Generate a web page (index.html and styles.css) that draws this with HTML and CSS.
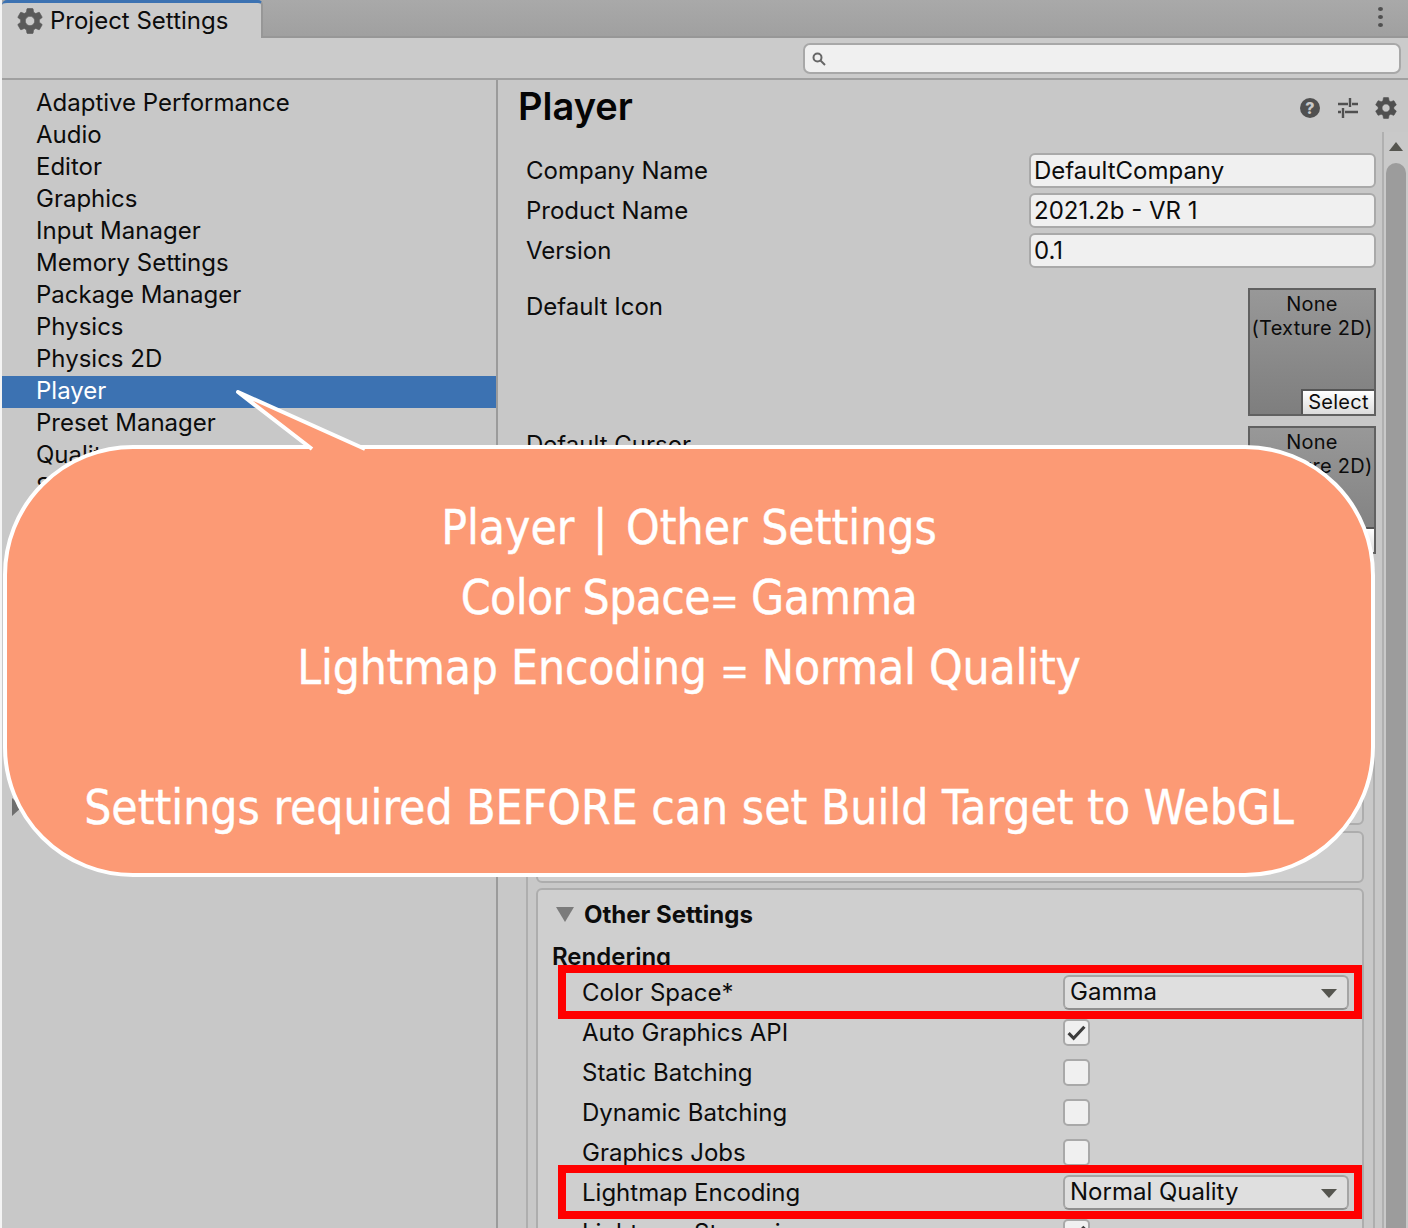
FILE: index.html
```html
<!DOCTYPE html>
<html lang="en">
<head>
    <meta charset="UTF-8">
    <title>Project Settings</title>
    <link rel="stylesheet" href="styles.css">
</head>
<body>
    <header class="tabbar">
        <div class="tab">
            <svg class="tab-gear" viewBox="2 2 20 20"><path d="M19.14 12.94c.04-.3.06-.61.06-.94 0-.32-.02-.64-.07-.94l2.03-1.58c.18-.14.23-.41.12-.61l-1.92-3.32c-.12-.22-.37-.29-.59-.22l-2.39.96c-.5-.38-1.03-.7-1.62-.94l-.36-2.54c-.04-.24-.24-.41-.48-.41h-3.84c-.24 0-.43.17-.47.41l-.36 2.54c-.59.24-1.13.57-1.62.94l-2.39-.96c-.22-.08-.47 0-.59.22L2.74 8.87c-.12.21-.08.47.12.61l2.03 1.58c-.05.3-.09.63-.09.94s.02.64.07.94l-2.03 1.58c-.18.14-.23.41-.12.61l1.92 3.32c.12.22.37.29.59.22l2.39-.96c.5.38 1.03.7 1.62.94l.36 2.54c.05.24.24.41.48.41h3.84c.24 0 .44-.17.47-.41l.36-2.54c.59-.24 1.13-.56 1.62-.94l2.39.96c.22.08.47 0 .59-.22l1.92-3.32c.12-.22.07-.47-.12-.61l-2.01-1.58zM12 15.6c-1.98 0-3.6-1.62-3.6-3.6s1.62-3.6 3.6-3.6 3.6 1.62 3.6 3.6-1.62 3.6-3.6 3.6z"/></svg>
            <span>Project Settings</span>
        </div>
        <div class="dots"><i></i><i></i><i></i></div>
    </header>

    <div class="toolbar">
        <div class="search">
            <svg viewBox="0 0 16 16" class="search-icon"><circle cx="6.5" cy="6.5" r="4" /><path d="M9.5 9.5 14 14" /></svg>
        </div>
    </div>

    <main class="main">
        <nav class="sidebar">
            <a>Adaptive Performance</a>
            <a>Audio</a>
            <a>Editor</a>
            <a>Graphics</a>
            <a>Input Manager</a>
            <a>Memory Settings</a>
            <a>Package Manager</a>
            <a>Physics</a>
            <a>Physics 2D</a>
            <a class="active">Player</a>
            <a>Preset Manager</a>
            <a>Quality</a>
            <a>Scene Template</a>
            <span class="tree-arrow"></span>
        </nav>

        <section class="content">
            <div class="content-head">
                <h1>Player</h1>
                <div class="head-icons">
                    <svg viewBox="0 0 22 22"><circle cx="11" cy="11" r="10" class="fill-icon" /><text x="11" y="16.5" text-anchor="middle" class="help-mark">?</text></svg>
                    <svg viewBox="0 0 22 22" class="sliders"><path d="M1 7h10M15 7h6M13 1v9M1 15h3M8 15h13M6 11v10" /></svg>
                    <svg viewBox="2 2 20 20" class="gear-icon"><path d="M19.14 12.94c.04-.3.06-.61.06-.94 0-.32-.02-.64-.07-.94l2.03-1.58c.18-.14.23-.41.12-.61l-1.92-3.32c-.12-.22-.37-.29-.59-.22l-2.39.96c-.5-.38-1.03-.7-1.62-.94l-.36-2.54c-.04-.24-.24-.41-.48-.41h-3.84c-.24 0-.43.17-.47.41l-.36 2.54c-.59.24-1.13.57-1.62.94l-2.39-.96c-.22-.08-.47 0-.59.22L2.74 8.87c-.12.21-.08.47.12.61l2.03 1.58c-.05.3-.09.63-.09.94s.02.64.07.94l-2.03 1.58c-.18.14-.23.41-.12.61l1.92 3.32c.12.22.37.29.59.22l2.39-.96c.5.38 1.03.7 1.62.94l.36 2.54c.05.24.24.41.48.41h3.84c.24 0 .44-.17.47-.41l.36-2.54c.59-.24 1.13-.56 1.62-.94l2.39.96c.22.08.47 0 .59-.22l1.92-3.32c.12-.22.07-.47-.12-.61l-2.01-1.58zM12 15.6c-1.98 0-3.6-1.62-3.6-3.6s1.62-3.6 3.6-3.6 3.6 1.62 3.6 3.6-1.62 3.6-3.6 3.6z"/></svg>
                </div>
            </div>

            <div class="content-body">
                <div class="inspector">
                    <div class="fields">
                        <div class="field-row"><label>Company Name</label><div class="text-field">DefaultCompany</div></div>
                        <div class="field-row"><label>Product Name</label><div class="text-field">2021.2b - VR 1</div></div>
                        <div class="field-row"><label>Version</label><div class="text-field">0.1</div></div>
                    </div>

                    <div class="texture-row">
                        <label>Default Icon</label>
                        <div class="texture">None<br>(Texture 2D)<span class="select-btn">Select</span></div>
                    </div>
                    <div class="texture-row">
                        <label>Default Cursor</label>
                        <div class="texture">None<br>(Texture 2D)<span class="select-btn">Select</span></div>
                    </div>

                    <div class="panels">
                        <div class="panel panel-tall"></div>
                        <div class="panel panel-short"></div>

                        <div class="panel panel-other">
                            <div class="foldout"><span class="fold-arrow"></span>Other Settings</div>
                            <div class="group-title">Rendering</div>
                            <div class="prop hl"><label>Color Space*</label><div class="dropdown">Gamma</div></div>
                            <div class="prop"><label>Auto Graphics API</label><div class="check on"><svg viewBox="0 0 16 16"><path d="M2.5 8.5 6 12l7.5-8" /></svg></div></div>
                            <div class="prop"><label>Static Batching</label><div class="check"></div></div>
                            <div class="prop"><label>Dynamic Batching</label><div class="check"></div></div>
                            <div class="prop"><label>Graphics Jobs</label><div class="check"></div></div>
                            <div class="prop hl"><label>Lightmap Encoding</label><div class="dropdown">Normal Quality</div></div>
                            <div class="prop"><label>Lightmap Streaming</label><div class="check on"><svg viewBox="0 0 16 16"><path d="M2.5 8.5 6 12l7.5-8" /></svg></div></div>
                        </div>
                    </div>
                </div>
                <div class="scrollbar">
                    <span class="scroll-up"></span>
                    <div class="thumb"></div>
                </div>
            </div>
        </section>
    </main>

    <!-- speech bubble over the window -->
    <aside class="callout">
        <svg class="callout-tail" viewBox="0 0 140 66"><path d="M77 59 3 2 130 59" /></svg>
        <p>Player <span class="pipe">|</span> Other Settings</p>
        <p class="tighter">Color Space<span class="eq">=</span> Gamma</p>
        <p class="tight">Lightmap Encoding <span class="eq">=</span> Normal Quality</p>
        <p>&nbsp;</p>
        <p>Settings required BEFORE can set Build Target to WebGL</p>
    </aside>
</body>
</html>
```

FILE: styles.css
```css
* {
    box-sizing: border-box;
}

html, body {
    margin: 0;
    padding: 0;
}

body {
    position: relative;
    display: flex;
    flex-direction: column;
    height: 1228px;
    overflow: hidden;
    padding-left: 2px;
    background-color: #f4f4f4;
    color: #0c0c0c;
    font-family: Inter, "Liberation Sans", sans-serif;
    font-size: 24px;
}

/* tab strip */
.tabbar {
    display: flex;
    justify-content: space-between;
    height: 38px;
    background: linear-gradient(#a9a9a9, #a0a0a0);
    border-bottom: 2px solid #979797;
}

.tab {
    display: flex;
    align-items: center;
    gap: 7px;
    width: 261px;
    height: 38px;
    padding: 0 0 0 15px;
    background-color: #cbcbcb;
    border-top: 3px solid #3c72b2;
    border-right: 2px solid #979797;
    border-radius: 5px 5px 0 0;
}

.tab-gear {
    width: 26px;
    height: 26px;
    fill: #5a5a5a;
    stroke: #5a5a5a;
    stroke-width: 0.5;
}

.dots {
    display: flex;
    flex-direction: column;
    gap: 4px;
    padding: 7px 25px 0 0;
}

.dots i {
    display: block;
    width: 5px;
    height: 4px;
    border-radius: 50%;
    background-color: #4f4f4f;
}

/* search bar */
.toolbar {
    display: flex;
    justify-content: flex-end;
    height: 42px;
    padding: 5px 7px 0 0;
    background-color: #cbcbcb;
    border-bottom: 2px solid #a0a0a0;
}

.search {
    display: flex;
    align-items: center;
    width: 598px;
    height: 31px;
    padding-left: 6px;
    background-color: #f0f0f0;
    border: 2px solid #a8a8a8;
    border-radius: 7px;
}

.search-icon {
    width: 16px;
    height: 16px;
    fill: none;
    stroke: #666;
    stroke-width: 2;
}

/* main area */
.main {
    display: flex;
    flex: 1;
    min-height: 0;
    background-color: #c8c8c8;
}

.sidebar {
    display: flex;
    flex-direction: column;
    width: 496px;
    flex-shrink: 0;
    padding-top: 8px;
    border-right: 2px solid #9b9b9b;
}

.sidebar a {
    display: block;
    height: 32px;
    padding-left: 34px;
    line-height: 30px;
}

.sidebar a.active {
    background-color: #3c72b2;
    color: #fff;
}

.tree-arrow {
    width: 0;
    height: 0;
    margin: 294px 0 0 10px;
    border-left: 10px solid #6e6e6e;
    border-top: 9px solid transparent;
    border-bottom: 9px solid transparent;
}

.content {
    display: flex;
    flex-direction: column;
    flex: 1;
    min-width: 0;
}

.content-head {
    display: flex;
    justify-content: space-between;
    align-items: center;
    height: 52px;
    padding: 0 11px 0 20px;
}

.content-head h1 {
    margin: 0;
    font-size: 38px;
    font-weight: 600;
    color: #050505;
}

.head-icons {
    display: flex;
    align-items: center;
    gap: 16px;
    padding-top: 4px;
}

.head-icons svg {
    width: 22px;
    height: 22px;
}

.fill-icon {
    fill: #505050;
}

.gear-icon {
    fill: #505050;
    stroke: #505050;
    stroke-width: 0.5;
}

.help-mark {
    fill: #c8c8c8;
    font-size: 16px;
    font-weight: 800;
}

.sliders {
    fill: none;
    stroke: #505050;
    stroke-width: 2.4;
}

.content-body {
    display: flex;
    flex: 1;
    min-height: 0;
    overflow: hidden;
}

.inspector {
    flex: 1;
    min-width: 0;
    padding: 21px 6px 0 28px;
}

.fields {
    display: flex;
    flex-direction: column;
    gap: 6px;
}

.field-row {
    display: flex;
    justify-content: space-between;
    align-items: center;
    height: 34px;
}

.text-field {
    align-self: flex-start;
    width: 347px;
    height: 35px;
    padding-left: 3px;
    line-height: 31px;
    background-color: #f0f0f0;
    border: 2px solid #a9a9a9;
    border-radius: 6px;
}

.texture-row {
    display: flex;
    justify-content: space-between;
    height: 128px;
    margin-top: 10px;
}

.texture-row:nth-child(2) {
    margin-top: 21px;
}

.texture-row label {
    padding-top: 4px;
}

.texture {
    position: relative;
    width: 128px;
    height: 128px;
    padding-top: 2px;
    font-size: 20px;
    letter-spacing: 0.25px;
    line-height: 24px;
    text-align: center;
    background: linear-gradient(#989898, #7e7e7e);
    border: 2px solid #616161;
}

.select-btn {
    position: absolute;
    right: 0;
    bottom: 0;
    width: 73px;
    height: 25px;
    line-height: 23px;
    background: linear-gradient(#fff, #dcdcdc);
    border: 1px solid #555;
    border-width: 2px 0 0 2px;
}

/* framed column with the collapsible sections */
.panels {
    margin: 16px 1px 0 0;
    border-left: 2px solid #aeaeae;
    border-right: 2px solid #aeaeae;
}

.panel {
    margin: 0 9px 6px 8px;
    background-color: #cfcfcf;
    border: 2px solid #adadad;
    border-radius: 6px;
}

.panel-tall {
    height: 255px;
}

.panel-short {
    height: 52px;
    margin-bottom: 5px;
}

.panel-other {
    height: 400px;
    padding: 0 0 0 14px;
}

.foldout {
    display: flex;
    align-items: center;
    height: 48px;
    font-weight: 700;
}

.fold-arrow {
    width: 0;
    height: 0;
    margin: 0 10px 0 4px;
    border-top: 15px solid #7b7b7b;
    border-left: 9px solid transparent;
    border-right: 9px solid transparent;
}

.group-title {
    height: 31px;
    margin-top: 3px;
    line-height: 32px;
    font-weight: 600;
}

.prop {
    position: relative;
    display: flex;
    align-items: center;
    justify-content: space-between;
    height: 40px;
    padding: 0 13px 0 30px;
}

/* red marker drawn over a row */
.prop.hl::after {
    content: "";
    position: absolute;
    inset: -7px 0 -7px 6px;
    border: 8px solid #ff0000;
}

.dropdown {
    position: relative;
    width: 286px;
    height: 35px;
    padding-left: 5px;
    line-height: 30px;
    background-color: #dfdfdf;
    border: 2px solid #a5a5a5;
    border-bottom-color: #8f8f8f;
    border-radius: 6px;
}

.dropdown::after {
    content: "";
    position: absolute;
    right: 10px;
    top: 12px;
    border-top: 9px solid #55554f;
    border-left: 8px solid transparent;
    border-right: 8px solid transparent;
}

.check {
    width: 27px;
    height: 27px;
    margin-right: 259px;
    background-color: #f0f0f0;
    border: 2px solid #a9a9a9;
    border-radius: 5px;
}

.check svg {
    display: block;
    width: 23px;
    height: 23px;
    fill: none;
    stroke: #3c3c3c;
    stroke-width: 2.2;
}

.scrollbar {
    display: flex;
    flex-direction: column;
    align-items: center;
    width: 26px;
    padding: 0 2px;
    background-color: #c9c9c9;
    border-left: 2px solid #b0b0b0;
}

.scroll-up {
    margin-top: 10px;
    border-bottom: 9px solid #55554f;
    border-left: 7px solid transparent;
    border-right: 7px solid transparent;
}

.thumb {
    flex: 1;
    width: 20px;
    margin-top: 12px;
    background-color: #9c9c9c;
    border-radius: 10px 10px 0 0;
}

/* callout */
.callout {
    position: absolute;
    left: 3px;
    top: 445px;
    width: 1372px;
    height: 432px;
    padding-top: 44px;
    background-color: #fc9a75;
    border: 4px solid #fff;
    border-radius: 130px;
    color: #fff;
    font-family: "DejaVu Sans Condensed", "Noto Sans", sans-serif;
    font-size: 47.6px;
    -webkit-text-stroke: 0.4px #fff;
    text-align: center;
}

.callout p {
    height: 70px;
    margin: 0;
    line-height: 70px;
}

.callout p.tight {
    letter-spacing: -0.2px;
}

.callout p.tighter {
    letter-spacing: -0.6px;
}

.eq {
    font-size: 38px;
}

.pipe {
    margin: 0 5px;
}

.callout-tail {
    position: absolute;
    left: 228px;
    top: -59px;
    width: 140px;
    height: 66px;
    fill: #fc9a75;
    stroke: #fff;
    stroke-width: 4;
    stroke-linejoin: round;
}
```
